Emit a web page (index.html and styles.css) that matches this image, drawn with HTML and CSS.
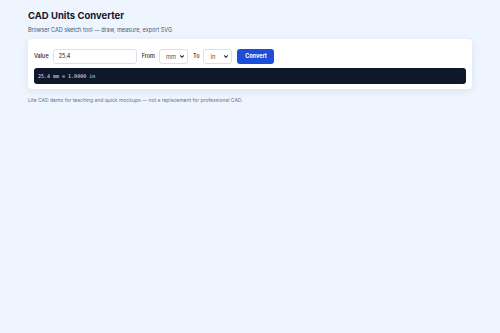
FILE: index.html
```html
<!DOCTYPE html>
<html lang="en">
<head>
<meta charset="utf-8">
<title>CAD Units Converter</title>
<link rel="stylesheet" href="styles.css">
</head>
<body>
<main class="page">
  <h1 class="title">CAD Units Converter</h1>
  <p class="subtitle">Browser CAD sketch tool — draw, measure, export SVG</p>
  <section class="card">
    <div class="row">
      <label class="lbl" for="val">Value</label>
      <input id="val" class="input" type="text" value="25.4">
      <label class="lbl lbl-from" for="from">From</label>
      <span class="sel-wrap">
        <select id="from" class="select"><option>mm</option><option>cm</option><option>in</option></select>
        <svg class="chev" viewBox="0 0 10 6" width="4" height="3"><path d="M1 1l4 4 4-4" fill="none" stroke="#1e293b" stroke-width="2.6" stroke-linecap="round" stroke-linejoin="round"/></svg>
      </span>
      <label class="lbl" for="to">To</label>
      <span class="sel-wrap">
        <select id="to" class="select"><option>in</option><option>mm</option><option>cm</option></select>
        <svg class="chev" viewBox="0 0 10 6" width="4" height="3"><path d="M1 1l4 4 4-4" fill="none" stroke="#1e293b" stroke-width="2.6" stroke-linecap="round" stroke-linejoin="round"/></svg>
      </span>
      <button class="btn" type="button">Convert</button>
    </div>
    <div class="result">25.4 mm = 1.0000 in</div>
  </section>
  <p class="note">Lite CAD demo for teaching and quick mockups — not a replacement for professional CAD.</p>
</main>
</body>
</html>
```
FILE: styles.css
```css
html, body {
  margin: 0;
  padding: 0;
  background: #eff5ff;
  font-family: Inter, "Noto Sans", sans-serif;
  color: #0f172a;
}
.page {
  width: 444px;
  padding: 10px 0 0 28px;
}
.title {
  margin: 0;
  font-size: 9.5px;
  line-height: 12px;
  font-weight: 700;
  color: #0f172a;
}
.subtitle {
  margin: 4px 0 0;
  font-size: 5.5px;
  line-height: 8px;
  color: #475569;
}
.card {
  margin-top: 5px;
  background: #fff;
  border-radius: 4px;
  padding: 9px 6px 5px;
  box-shadow: 0 2px 8px rgba(15, 23, 42, 0.08);
}
.row {
  display: flex;
  align-items: center;
  height: 16px;
}
.lbl {
  font-size: 5.5px;
  font-weight: 500;
  color: #1e293b;
  margin-right: 4px;
}
.lbl-from { margin-left: 5px; }
.input {
  box-sizing: border-box;
  width: 84px;
  height: 15px;
  border: 1px solid #dbe1ea;
  border-radius: 3px;
  padding: 0 5px;
  font: 5.5px Inter, sans-serif;
  color: #0f172a;
  outline: none;
}
.sel-wrap {
  position: relative;
  display: inline-flex;
  margin-right: 5px;
}
.select {
  -webkit-appearance: none;
  appearance: none;
  box-sizing: border-box;
  width: 29px;
  height: 15px;
  border: 1px solid #dbe1ea;
  border-radius: 3px;
  padding: 0 0 0 6px;
  font: 5.8px Inter, sans-serif;
  color: #6b4e22;
  background: #fff;
}
.chev {
  position: absolute;
  right: 4px;
  top: 6px;
  pointer-events: none;
}
.btn {
  box-sizing: border-box;
  width: 37px;
  height: 15px;
  border: 0;
  border-radius: 3px;
  background: #1d4ed8;
  color: #fff;
  font: 700 5.5px Inter, sans-serif;
  padding: 0;
}
.result {
  margin-top: 4px;
  height: 16px;
  display: flex;
  align-items: center;
  padding: 0 4px;
  border-radius: 3px;
  background: #0f172a;
  color: #e2e8f0;
  font-family: "DejaVu Sans Mono", monospace;
  font-size: 5px;
}
.note {
  margin: 7px 0 0;
  font-size: 5px;
  line-height: 8px;
  color: #64748b;
}
```
